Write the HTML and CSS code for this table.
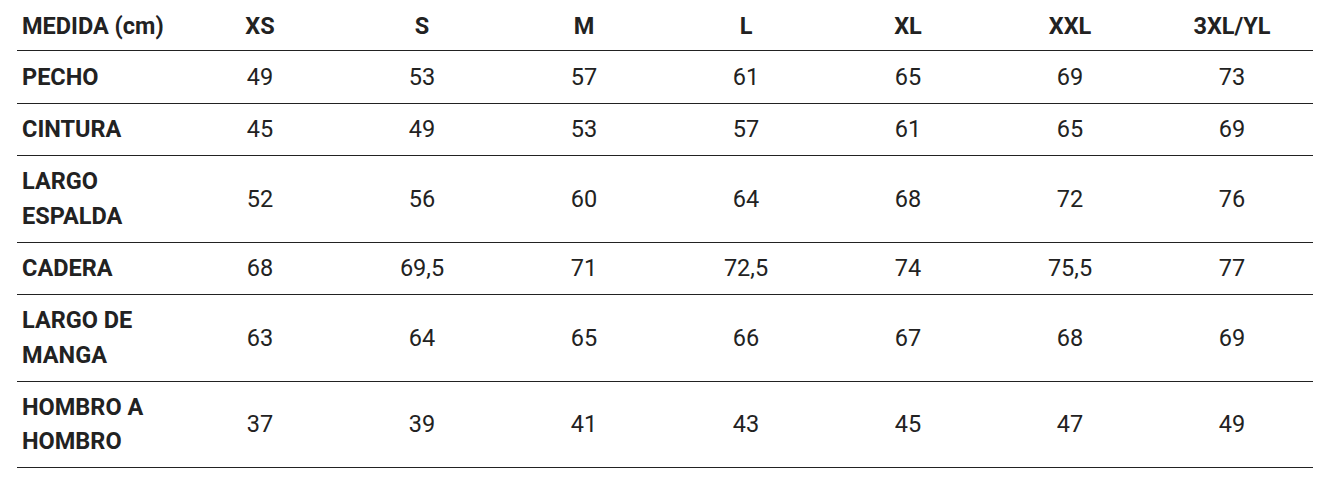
FILE: index.html
```html
<!DOCTYPE html>
<html lang="es">
<head>
<meta charset="utf-8">
<title>Tabla de medidas</title>
<link rel="stylesheet" href="styles.css">
</head>
<body>
<table class="size-table">
  <thead>
    <tr>
      <th class="label">MEDIDA (cm)</th>
      <th>XS</th><th>S</th><th>M</th><th>L</th><th>XL</th><th>XXL</th><th>3XL/YL</th>
    </tr>
  </thead>
  <tbody>
    <tr><th class="label">PECHO</th><td>49</td><td>53</td><td>57</td><td>61</td><td>65</td><td>69</td><td>73</td></tr>
    <tr><th class="label">CINTURA</th><td>45</td><td>49</td><td>53</td><td>57</td><td>61</td><td>65</td><td>69</td></tr>
    <tr><th class="label">LARGO ESPALDA</th><td>52</td><td>56</td><td>60</td><td>64</td><td>68</td><td>72</td><td>76</td></tr>
    <tr><th class="label">CADERA</th><td>68</td><td>69,5</td><td>71</td><td>72,5</td><td>74</td><td>75,5</td><td>77</td></tr>
    <tr><th class="label">LARGO DE MANGA</th><td>63</td><td>64</td><td>65</td><td>66</td><td>67</td><td>68</td><td>69</td></tr>
    <tr><th class="label">HOMBRO A HOMBRO</th><td>37</td><td>39</td><td>41</td><td>43</td><td>45</td><td>47</td><td>49</td></tr>
  </tbody>
</table>
</body>
</html>
```
FILE: styles.css
```css
html, body {
  margin: 0;
  padding: 0;
  background: #ffffff;
}

body {
  font-family: Roboto, "Liberation Sans", Arial, sans-serif;
  color: #222222;
}

.size-table {
  margin-left: 17px;
  width: 1296px;
  border-collapse: collapse;
  table-layout: fixed;
  font-size: 23.5px;
  line-height: 34.4px;
}

.size-table th,
.size-table td {
  padding: 8.45px 5px;
  text-align: center;
  vertical-align: middle;
  border-bottom: 1px solid #222222;
}

.size-table th {
  font-weight: 700;
}

.size-table td {
  font-weight: 400;
}

.size-table thead th {
  padding-top: 9px;
  padding-bottom: 7px;
}

.size-table .label {
  text-align: left;
}
```
